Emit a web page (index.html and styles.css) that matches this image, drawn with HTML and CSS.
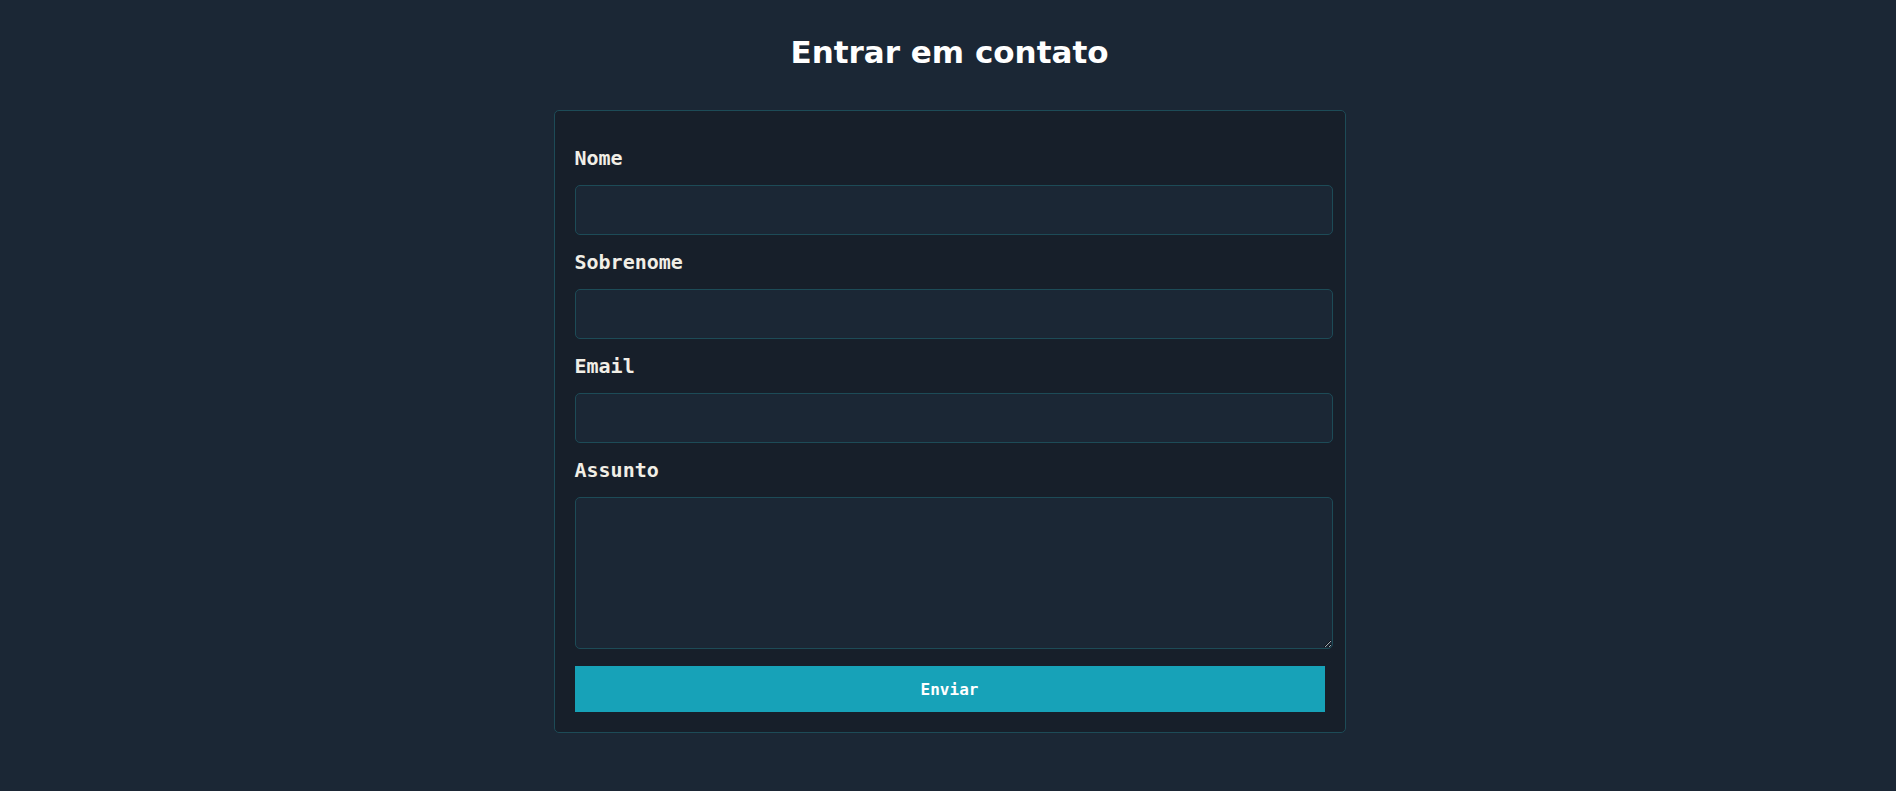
FILE: index.html
```html
<!DOCTYPE html>
<html lang="pt-BR">
<head>
<meta charset="utf-8">
<title>Entrar em contato</title>
<link rel="stylesheet" href="styles.css">
</head>
<body>
<main class="page">
  <h1 class="title">Entrar em contato</h1>
  <form class="card">
    <label class="label" for="nome">Nome</label>
    <input class="field" id="nome" type="text">
    <label class="label" for="sobrenome">Sobrenome</label>
    <input class="field" id="sobrenome" type="text">
    <label class="label" for="email">Email</label>
    <input class="field" id="email" type="email">
    <label class="label" for="assunto">Assunto</label>
    <textarea class="field area" id="assunto"></textarea>
    <button class="send" type="button">Enviar</button>
  </form>
</main>
</body>
</html>
```
FILE: styles.css
```css
html, body {
  margin: 0;
  padding: 0;
  background: #1b2735;
}
.page {
  display: flex;
  flex-direction: column;
  align-items: center;
  padding-top: 32px;
  padding-left: 3px;
}
.title {
  margin: 0 0 38px;
  font-family: "DejaVu Sans", sans-serif;
  font-weight: bold;
  font-size: 31px;
  line-height: 40px;
  color: #ffffff;
}
.card {
  width: 750px;
  padding: 20px;
  border: 1px solid #1d4b57;
  border-radius: 5px;
  background: #171f2a;
  display: flex;
  flex-direction: column;
  align-items: flex-start;
}
.label {
  display: block;
  margin: 15px 0;
  font-family: "DejaVu Sans Mono", monospace;
  font-weight: bold;
  font-size: 20px;
  line-height: 24px;
  color: #f1eee6;
}
.field {
  display: block;
  box-sizing: content-box;
  width: 100%;
  height: 48px;
  padding: 0 3px;
  margin: 0;
  border: 1px solid #1d4b57;
  border-radius: 5px;
  background: #1b2735;
  color: #ffffff;
  font-family: "DejaVu Sans Mono", monospace;
  font-size: 16px;
  outline: none;
}
.area {
  height: 150px;
  resize: both;
}
.send {
  width: 100%;
  height: 46px;
  margin-top: 17px;
  border: none;
  background: #17a2b8;
  color: #ffffff;
  font-family: "DejaVu Sans Mono", monospace;
  font-weight: bold;
  font-size: 16px;
  cursor: pointer;
}
```
